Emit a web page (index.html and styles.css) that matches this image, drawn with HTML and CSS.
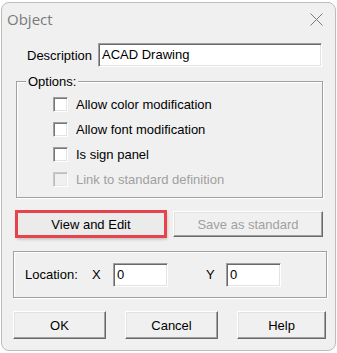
FILE: index.html
```html
<!DOCTYPE html>
<html>
<head>
<meta charset="utf-8">
<link rel="stylesheet" href="styles.css">
</head>
<body>
<div class="dialog">
  <div class="titlebar">
    <span class="title">Object</span>
    <svg class="close" width="13" height="13" viewBox="0 0 13 13"><path d="M0.5 0.5 L12.5 12.5 M12.5 0.5 L0.5 12.5" stroke="#7a7a7a" stroke-width="1" fill="none"/></svg>
  </div>
  <div class="desc-row">
    <span class="desc-label">Description</span>
    <div class="field desc-field">ACAD Drawing</div>
  </div>
  <fieldset class="group options">
    <legend>Options:</legend>
    <div class="rows">
      <div class="row"><span class="check"></span><span>Allow color modification</span></div>
      <div class="row"><span class="check"></span><span>Allow font modification</span></div>
      <div class="row"><span class="check"></span><span>Is sign panel</span></div>
      <div class="row disabled"><span class="check"></span><span>Link to standard definition</span></div>
    </div>
  </fieldset>
  <div class="btn-row">
    <div class="btn wide highlight">View and Edit</div>
    <div class="btn wide disabled-btn">Save as standard</div>
  </div>
  <div class="group location">
    <span class="loc-label">Location:</span>
    <span class="axis">X</span>
    <div class="field coord">0</div>
    <span class="spacer"></span>
    <span class="axis y">Y</span>
    <div class="field coord">0</div>
  </div>
  <div class="footer">
    <div class="btn foot">OK</div>
    <div class="btn foot">Cancel</div>
    <div class="btn foot help">Help</div>
  </div>
</div>
</body>
</html>
```
FILE: styles.css
```css
html, body {
  margin: 0;
  padding: 0;
  background: #ffffff;
}
body {
  font-family: "Liberation Sans", Arial, sans-serif;
  font-size: 13px;
  color: #000;
}
.dialog {
  box-sizing: border-box;
  width: 335px;
  height: 349px;
  margin: 2px 0 0 1px;
  border: 1px solid #bcbcbc;
  border-radius: 8px;
  background: #f0f0f0;
  overflow: hidden;
}
.titlebar {
  height: 34px;
  display: flex;
  align-items: center;
  justify-content: space-between;
  padding: 0 12px 0 5px;
}
.title {
  font-family: "Open Sans", "Noto Sans", sans-serif;
  font-size: 15px;
  color: #7a7a7a;
  line-height: 20px;
  margin-top: -2px;
}
.close {
  display: block;
  margin-top: -2px;
}
.desc-row {
  display: flex;
  align-items: center;
  margin-top: 6px;
  padding-left: 25px;
  height: 24px;
}
.desc-label {
  width: 71px;
}
.field {
  box-sizing: border-box;
  height: 24px;
  background: #fff;
  border: 1px solid;
  border-color: #a0a0a0 #ffffff #ffffff #a0a0a0;
  box-shadow: inset 1px 1px 0 #696969, inset -1px -1px 0 #e3e3e3;
  padding: 0 0 0 3px;
  line-height: 22px;
  white-space: nowrap;
}
.desc-field {
  width: 224px;
}
.group {
  border: 1px solid #a0a0a0;
  box-shadow: inset 1px 1px 0 #fff, 1px 1px 0 #fff;
}
.options {
  box-sizing: border-box;
  width: 307px;
  margin: 7px 0 0 14px;
  padding: 0 0 5px 0;
  min-width: 0;
}
.options legend {
  margin-left: 9px;
  padding: 0 2px;
  line-height: 15px;
  background: #f0f0f0;
}
.rows {
  margin-top: 3px;
}
.row {
  display: flex;
  align-items: center;
  height: 25px;
  padding-left: 36px;
}
.check {
  box-sizing: border-box;
  width: 15px;
  height: 15px;
  margin-right: 8px;
  background: #fff;
  border: 1px solid;
  border-color: #a0a0a0 #ffffff #ffffff #a0a0a0;
  box-shadow: inset 1px 1px 0 #777, inset -1px -1px 0 #e3e3e3;
}
.row.disabled {
  color: #a0a0a0;
}
.row.disabled .check {
  background: #f0f0f0;
  border-color: #c8c8c8 #ffffff #ffffff #c8c8c8;
  box-shadow: inset 1px 1px 0 #bdbdbd, inset -1px -1px 0 #e8e8e8;
}
.btn-row {
  display: flex;
  gap: 7px;
  margin: 13px 0 0 14px;
}
.btn {
  box-sizing: border-box;
  display: flex;
  align-items: center;
  justify-content: center;
  background: #f0f0f0;
  border: 1px solid;
  border-color: #ffffff #696969 #696969 #ffffff;
  box-shadow: inset -1px -1px 0 #a0a0a0, inset 1px 1px 0 #e3e3e3;
}
.wide {
  width: 150px;
  height: 26px;
}
.highlight {
  outline: 3px solid #e8434b;
  outline-offset: -2px;
  background: #ebebeb;
  box-shadow: inset -1px -1px 0 #696969, inset 1px 1px 0 #e3e3e3, 1px 2px 3px rgba(0, 0, 0, 0.25);
}
.disabled-btn {
  color: #a0a0a0;
}
.location {
  box-sizing: border-box;
  width: 314px;
  height: 47px;
  margin: 14px 0 0 11px;
  display: flex;
  align-items: center;
  padding-left: 11px;
}
.loc-label {
  width: 67px;
}
.axis {
  width: 21px;
}
.axis.y {
  width: 20px;
}
.coord {
  width: 55px;
}
.spacer {
  width: 38px;
}
.footer {
  display: flex;
  gap: 19px;
  margin: 13px 0 0 11px;
}
.foot {
  width: 93px;
  height: 28px;
}
.foot.help {
  width: 89px;
}
```
